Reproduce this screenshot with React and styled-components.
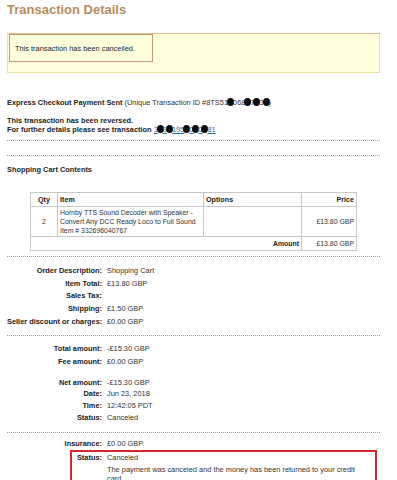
import React from "react";
import styled, { createGlobalStyle } from "styled-components";

const GlobalStyle = createGlobalStyle`
  html, body {
    margin: 0;
    padding: 0;
    background: #ffffff;
  }
  body {
    font-family: "Liberation Sans", Arial, sans-serif;
    font-size: 7.4px;
    color: #222;
    overflow: hidden;
  }
`;

const Page = styled.div`
  width: 373px;
  padding-left: 7px;
`;

const Title = styled.h1`
  margin: 0;
  padding-top: 2px;
  font-size: 13px;
  line-height: 15px;
  font-weight: bold;
  color: #b98c5e;
`;

const Notice = styled.div`
  margin-top: 16px;
  height: 38px;
  background: #ffffdc;
  border: 1px solid #ebe3a4;
  border-top-color: #dcbf8e;
`;

const NoticeInner = styled.div`
  margin-left: 1px;
  width: 144px;
  height: 28px;
  box-sizing: border-box;
  border: 1px solid #c39b78;
  display: flex;
  align-items: center;
  padding-left: 5px;
  color: #222;
`;

const Line = styled.div`
  line-height: 9px;
  margin-top: ${(p) => p.$top || 0}px;
  white-space: nowrap;
`;

const Strong = styled.b`
  font-weight: bold;
  color: #1e1e1e;
`;

const Soft = styled.span`
  color: #333;
`;

const Link = styled.span`
  color: #2c6fae;
  text-decoration: underline;
`;

const Blot = styled.span`
  display: inline-block;
  width: 7px;
  height: 8px;
  border-radius: 50%;
  background: #0c0c0c;
  vertical-align: -1px;
  margin: 0 -1px;
`;

const Dotted = styled.hr`
  margin: ${(p) => p.$top || 0}px 0 0 0;
  border: 0;
  border-top: 1px dotted #9a9a9a;
  height: 0;
`;

const Cart = styled.table`
  margin-top: 18px;
  margin-left: 23px;
  width: 326px;
  table-layout: fixed;
  border-collapse: collapse;
  border: 1px solid #c9c9c9;
  color: #333;
  font-size: 6.9px;
`;

const Th = styled.th`
  height: 13px;
  padding: 0 2px;
  border: 1px solid #c9c9c9;
  font-weight: bold;
  font-size: 7.2px;
  color: #222;
  text-align: ${(p) => p.$align || "left"};
`;

const Td = styled.td`
  height: ${(p) => p.$h || 13}px;
  padding: 0 2px;
  border: 1px solid #c9c9c9;
  line-height: 9px;
  vertical-align: middle;
  white-space: ${(p) => (p.$nowrap ? "nowrap" : "normal")};
  text-align: ${(p) => p.$align || "left"};
  font-weight: ${(p) => (p.$bold ? "bold" : "normal")};
  color: ${(p) => (p.$bold ? "#222" : "#333")};
`;

const Details = styled.div`
  margin-top: ${(p) => p.$top || 0}px;
`;

const Row = styled.div`
  display: grid;
  grid-template-columns: ${(p) => p.$label || 95}px 1fr;
  column-gap: 5px;
  min-height: ${(p) => p.$h || 12.8}px;
  align-items: center;
  margin-top: ${(p) => p.$top || 0}px;
`;

const Label = styled.div`
  text-align: right;
  font-weight: bold;
  color: #222;
  white-space: nowrap;
`;

const Value = styled.div`
  color: #333;
  line-height: 9px;
  padding-right: 4px;
`;

const Highlight = styled.div`
  margin-left: 63px;
  width: 303px;
  border: 2px solid #d8262c;
  border-bottom: 0;
`;

const detailsA = [
  ["Order Description:", "Shopping Cart"],
  ["Item Total:", "£13.80 GBP"],
  ["Sales Tax:", ""],
  ["Shipping:", "£1.50 GBP"],
  ["Seller discount or charges:", "£0.00 GBP"],
];

const detailsB = [
  ["Net amount:", "-£15.30 GBP"],
  ["Date:", "Jun 23, 2018"],
  ["Time:", "12:42:05 PDT"],
  ["Status:", "Canceled"],
];

export default function App() {
  return (
    <Page>
      <GlobalStyle />
      <Title>Transaction Details</Title>
      <Notice>
        <NoticeInner>This transaction has been cancelled.</NoticeInner>
      </Notice>

      <Line $top={25}>
        <Strong>Express Checkout Payment Sent</Strong>{" "}
        <Soft>
          (Unique Transaction ID #8TS51<Blot />068<Blot />7<Blot />3<Blot />)
        </Soft>
      </Line>
      <Line $top={9}>
        <Strong>This transaction has been reversed.</Strong>
      </Line>
      <Line>
        <Strong>For further details please see transaction</Strong>{" "}
        <Link>
          3<Blot />9<Blot />195<Blot />0<Blot />0<Blot />81
        </Link>
      </Line>
      <Dotted $top={6} />
      <Dotted $top={14} />
      <Line $top={9}>
        <Strong>Shopping Cart Contents</Strong>
      </Line>

      <Cart>
        <colgroup>
          <col style={{ width: "27px" }} />
          <col style={{ width: "146px" }} />
          <col style={{ width: "98px" }} />
          <col style={{ width: "55px" }} />
        </colgroup>
        <thead>
          <tr>
            <Th $align="center">Qty</Th>
            <Th>Item</Th>
            <Th>Options</Th>
            <Th $align="right">Price</Th>
          </tr>
        </thead>
        <tbody>
          <tr>
            <Td $h={29} $align="center">2</Td>
            <Td $h={29} $nowrap>
              Hornby TTS Sound Decoder with Speaker -
              <br />
              Convert Any DCC Ready Loco to Full Sound
              <br />
              Item # 332696040767
            </Td>
            <Td $h={29} />
            <Td $h={29} $align="right">£13.80 GBP</Td>
          </tr>
          <tr>
            <Td colSpan={3} $align="right" $bold>
              Amount
            </Td>
            <Td $align="right">£13.80 GBP</Td>
          </tr>
        </tbody>
      </Cart>

      <Dotted $top={5} />
      <Details $top={7}>
        {detailsA.map(([k, v]) => (
          <Row key={k}>
            <Label>{k}</Label>
            <Value>{v}</Value>
          </Row>
        ))}
      </Details>

      <Dotted $top={7} />
      <Details $top={6}>
        <Row>
          <Label>Total amount:</Label>
          <Value>-£15.30 GBP</Value>
        </Row>
        <Row>
          <Label>Fee amount:</Label>
          <Value>£0.00 GBP</Value>
        </Row>
        {detailsB.map(([k, v], i) => (
          <Row key={k} $top={i === 0 ? 9 : 0} $h={i === 0 ? 11 : 12}>
            <Label>{k}</Label>
            <Value>{v}</Value>
          </Row>
        ))}
      </Details>

      <Dotted $top={8} />
      <Details $top={5}>
        <Row>
          <Label>Insurance:</Label>
          <Value>£0.00 GBP</Value>
        </Row>
        <Highlight>
          <Row $label={30} $h={10}>
            <Label>Status:</Label>
            <Value>Canceled</Value>
          </Row>
          <Row $label={30} $top={3}>
            <Label />
            <Value>
              The payment was canceled and the money has been returned to your
              credit card
            </Value>
          </Row>
        </Highlight>
      </Details>
    </Page>
  );
}
